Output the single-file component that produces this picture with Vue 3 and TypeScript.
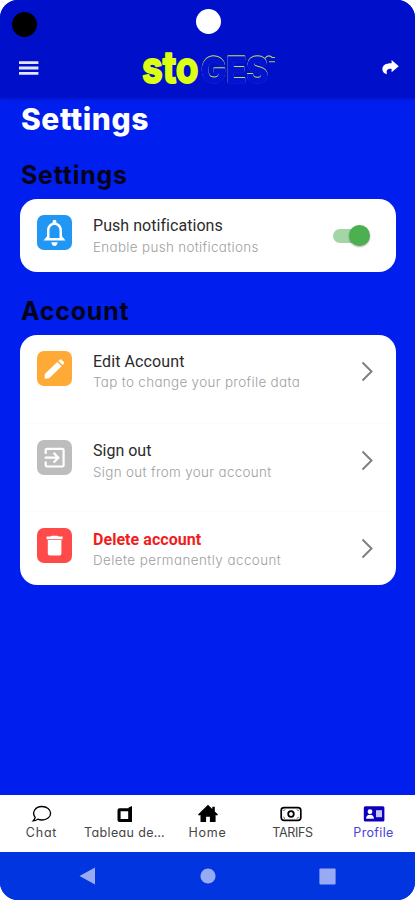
<script setup lang="ts">
import { ref } from 'vue'

interface AccountRow {
  id: string
  title: string
  detail: string
}

interface Tab {
  id: string
  label: string
}

const pushEnabled = ref(true)
const activeTab = ref('profile')

const rows: AccountRow[] = [
  { id: 'edit', title: 'Edit Account', detail: 'Tap to change your profile data' },
  { id: 'signout', title: 'Sign out', detail: 'Sign out from your account' },
  { id: 'delete', title: 'Delete account', detail: 'Delete permanently account' },
]

const tabs: Tab[] = [
  { id: 'chat', label: 'Chat' },
  { id: 'board', label: 'Tableau de…' },
  { id: 'home', label: 'Home' },
  { id: 'tarifs', label: 'TARIFS' },
  { id: 'profile', label: 'Profile' },
]
</script>

<template>
  <div class="phone">
    <header class="top">
      <div class="status">
        <span class="dot"></span>
        <span class="camera"></span>
      </div>
      <div class="appbar">
        <svg class="menu" width="20" height="14" viewBox="0 0 20 14">
          <path d="M0 1.7h19.4M0 7h19.4M0 12.3h19.4" stroke="#e4e4ff" stroke-width="2.8" />
        </svg>
        <svg class="logo" width="136" height="44" viewBox="0 0 136 44">
          <text class="ges" x="61" y="37" textLength="67" lengthAdjust="spacingAndGlyphs">GES</text>
          <path d="M125 12.5q2.5-4 6-2l1 1h3M129 15.8h6" fill="none" stroke="#b3ce5c" stroke-width="1.1" />
          <text class="sto" x="2" y="36.8" textLength="56.5" lengthAdjust="spacingAndGlyphs">sto</text>
        </svg>
        <svg class="share" width="17" height="15" viewBox="0 0 17 15">
          <path d="M9.6 0 16.8 6.2 9.6 12.2V8.9C5.7 8.6 3.9 9.8 5 14.3 2 13.4.4 11.8.4 9.2.4 5.2 3.6 3.2 9.6 3.2Z" fill="#fff" />
        </svg>
      </div>
    </header>

    <main class="content">
      <h1>Settings</h1>
      <h2 class="h-settings">Settings</h2>
      <section class="card single">
        <div class="row">
          <span class="tile push">
            <svg width="35" height="35" viewBox="0 0 35 35">
              <path d="M6.5 25.5h22l-3.5-4.3v-5.5c0-4.2-2.2-7.2-5.6-8V6.6a1.9 1.9 0 0 0-3.8 0v1.1c-3.4.8-5.6 3.8-5.6 8v5.5ZM12.5 23v-7.2c0-3.3 1.9-5.8 5-5.8s5 2.5 5 5.8V23Z" fill="#fff" fill-rule="evenodd" />
              <path d="M14.3 27.3h6.4q-.6 3.6-3.2 3.6t-3.2-3.6Z" fill="#fff" />
            </svg>
          </span>
          <div class="copy">
            <div class="title t-push">Push notifications</div>
            <div class="detail d-push">Enable push notifications</div>
          </div>
          <button class="switch" :class="{ on: pushEnabled }" aria-label="Push notifications" @click="pushEnabled = !pushEnabled"><span></span></button>
        </div>
      </section>

      <h2 class="h-account">Account</h2>
      <section class="card list">
        <div v-for="row in rows" :key="row.id" class="row">
          <span class="tile" :class="row.id">
            <svg v-if="row.id === 'edit'" width="35" height="35" viewBox="0 0 35 35" fill="#fff">
              <path d="m7.6 27.8.2-4.7L20.3 11l4.3 4.2-12.4 12.1Z" />
              <path d="m21.4 10 1.4-1.3q.9-.8 1.8 0l2.2 2.2q.8.9 0 1.8l-1.3 1.4Z" />
            </svg>
            <svg v-else-if="row.id === 'signout'" width="35" height="35" viewBox="0 0 35 35" fill="none" stroke="#fff" stroke-width="2.2">
              <path d="M8.7 14V10q0-1.2 1.2-1.2h15.5q1.2 0 1.2 1.2v15.3q0 1.2-1.2 1.2H9.9q-1.2 0-1.2-1.2v-3.8M7.7 17.7h13M16.6 12.9l4.8 4.8-4.8 4.8" />
            </svg>
            <svg v-else width="35" height="35" viewBox="0 0 35 35" fill="#fff">
              <path d="M9.5 8.5h4l1.2-.8h5.7l1.2.8h4v2.8h-16ZM10.8 12h13.6v13.6q0 2-2 2h-9.6q-2 0-2-2Z" />
            </svg>
          </span>
          <div class="copy">
            <div class="title" :class="'t-' + row.id">{{ row.title }}</div>
            <div class="detail" :class="'d-' + row.id">{{ row.detail }}</div>
          </div>
          <svg class="chevron" width="13" height="21" viewBox="0 0 13 21">
            <path d="m1.5 1.5 9 9-9 9" fill="none" stroke="#808080" stroke-width="2" />
          </svg>
        </div>
      </section>
    </main>

    <nav class="tabs">
      <button v-for="tab in tabs" :key="tab.id" class="tab" :class="[tab.id, { active: tab.id === activeTab }]" @click="activeTab = tab.id">
        <svg v-if="tab.id === 'chat'" width="22" height="20" viewBox="0 0 22 20">
          <path d="M4.2 13.4C.6 8.8 3.8 2.5 11 2.5c4.8 0 8.6 2.9 8.6 6.7s-3.8 6.8-8.6 6.8c-1.6 0-3-.3-4.2-.8-1.2.9-2.9 1.7-4.7 1.7 1-.9 1.9-2.2 2.1-3.5Z" fill="none" stroke="currentColor" stroke-width="1.3" />
        </svg>
        <svg v-else-if="tab.id === 'board'" width="22" height="20" viewBox="0 0 22 20">
          <path d="M14.6 3.5 18 2v16H5.5q-2 0-2-2V6.3q0-2 2-2h9.1ZM6.6 7.3v7.6h7.6V7.3Z" fill="currentColor" fill-rule="evenodd" />
        </svg>
        <svg v-else-if="tab.id === 'home'" width="22" height="20" viewBox="0 0 22 20">
          <path d="M11 .8 15.3 5V2.7h2.5v4.8l3.2 3-.9 1-1.5-.6V18h-5.7v-5.3H9.1V18H3.5v-7.1l-1.6.6-.9-1Z" fill="currentColor" />
        </svg>
        <svg v-else-if="tab.id === 'tarifs'" width="22" height="20" viewBox="0 0 22 20">
          <rect x="1.2" y="3.6" width="19.6" height="12.8" rx="2.8" fill="none" stroke="currentColor" stroke-width="1.7" />
          <circle cx="11" cy="10" r="2.8" fill="none" stroke="currentColor" stroke-width="1.8" />
          <path d="m3.4 7 1.6-1.6M17 5.4 18.6 7M3.4 13 5 14.6M17 14.6l1.6-1.6" stroke="currentColor" stroke-width=".8" />
        </svg>
        <svg v-else width="22" height="20" viewBox="0 0 22 20">
          <rect x=".8" y="2.2" width="20.6" height="15.3" rx="1.5" fill="currentColor" />
          <circle cx="7" cy="7.7" r="2.4" fill="#fff" />
          <path d="M3.1 14.8q0-4 3.9-4t3.9 4Z" fill="#fff" />
          <rect x="13" y="6.2" width="6" height="7" fill="#c6c3ff" />
        </svg>
        <span class="label">{{ tab.label }}</span>
      </button>
    </nav>

    <footer class="system">
      <svg width="17" height="18" viewBox="0 0 17 18"><path d="M16 .5v17L.5 9Z" fill="#99aaf5" /></svg>
      <svg width="16" height="16" viewBox="0 0 16 16"><circle cx="8" cy="8" r="7.6" fill="#99aaf5" /></svg>
      <svg width="17" height="17" viewBox="0 0 17 17"><rect x=".4" y=".4" width="16.2" height="16.2" rx="1" fill="#99aaf5" /></svg>
    </footer>
  </div>
</template>

<style>
body { background: #fff; }
</style>

<style scoped>
* { box-sizing: border-box; }
.phone {
  width: 415px;
  height: 900px;
  border-radius: 18px;
  overflow: hidden;
  background: #001fee;
  display: flex;
  flex-direction: column;
  font-family: Inter, "Open Sans", sans-serif;
  font-feature-settings: "cv11";
}
button { border: 0; padding: 0; background: none; font: inherit; font-feature-settings: inherit; letter-spacing: inherit; }
svg { display: block; flex: none; }
.top { height: 98px; background: #000fca; box-shadow: 0 1px 3px #0008a880; flex: none; }
.status { height: 46px; display: flex; padding: 9px 12px 0; }
.dot { width: 25px; height: 25px; border-radius: 50%; background: #000; margin-top: 3px; }
.camera { width: 25px; height: 25px; border-radius: 50%; background: #fff; margin-left: 158.5px; }
.appbar { height: 44px; display: flex; align-items: center; padding: 0 16px 0 19px; }
.logo { margin-left: 101px; overflow: visible; }
.share { margin: 0 0 2px auto; }
.logo text { font-family: Inter, sans-serif; font-feature-settings: normal; }
.sto { font-size: 44px; font-weight: 700; fill: #dcff13; stroke: #dcff13; stroke-width: 2; stroke-linejoin: round; }
.ges {
  font-size: 35px;
  font-weight: 700;
  fill: #0214d2;
  stroke: #0214d2;
  stroke-width: 1.6;
  stroke-linejoin: round;
  filter: drop-shadow(0 -1px 0 #c5df48) drop-shadow(.4px .8px 0 #2740bd);
}

.content { flex: 1; padding: 0 20px; }
h1, h2 { margin: 0; white-space: nowrap; font-weight: 700; }
h1 { height: 61px; padding: 1px 0 0 1px; font-size: 30px; line-height: 40px; color: #fff; font-weight: 800; letter-spacing: .55px; }
h2 { padding-left: 1px; font-size: 25px; line-height: 32px; color: #03031c; height: 40px; letter-spacing: .75px; }
.h-account { margin-top: 23px; }
.card { background: #fff; border-radius: 17px; width: 376px; }
.single { height: 73px; }
.list { height: 250px; }
.row { height: 88.7px; display: flex; padding: 16px 16px 0 17px; }
.list .row:last-child { height: 72px; }
.list .row + .row { box-shadow: 0 -1px #fcfcfc; }
.tile { width: 35px; height: 35px; border-radius: 7px; flex: none; }
.push { background: #2196f3; }
.tile.edit { background: #ffa936; }
.tile.signout { background: #bdbdbd; }
.tile.delete { background: #ff4a4a; }
.copy { margin-left: 21px; flex: 1; white-space: nowrap; }
.title { font-family: Roboto, sans-serif; font-size: 16px; line-height: 22px; color: #2b2b2b; }
.t-push { letter-spacing: .05px; }
.t-edit { letter-spacing: .1px; }
.t-delete { color: #f11d1d; font-weight: 700; letter-spacing: .05px; padding-top: 1px; margin-bottom: -1px; }
.detail { font-size: 13.4px; line-height: 20px; color: #a0a0a0; font-weight: 300; letter-spacing: .34px; }
.d-edit { line-height: 19px; }
.d-delete { letter-spacing: .44px; }
.switch { width: 37px; height: 21px; margin: 10px 10px 0 0; display: flex; align-items: center; position: relative; }
.switch::before { content: ""; width: 34px; height: 14px; border-radius: 7px; background: #bbb; }
.switch.on::before { background: #a3d6a5; }
.switch span { position: absolute; left: 0; top: 0; width: 21px; height: 21px; border-radius: 50%; background: #eee; box-shadow: 0 1px 2px #0005; }
.switch.on span { left: 16px; background: #4caf50; }
.chevron { margin: 10px 6px 0 0; }

.tabs { height: 57px; background: #fff; display: grid; grid-template-columns: repeat(5, 83px); flex: none; }
.tab { display: flex; flex-direction: column; align-items: center; padding-top: 9px; color: #000; }
.label { font-size: 12.5px; line-height: 18px; color: #454545; white-space: nowrap; letter-spacing: .35px; }
.chat .label, .home .label { letter-spacing: .8px; }
.tarifs .label { letter-spacing: -.3px; padding-left: 4px; }
.tab.active { color: #0d00bd; }
.tab.active .label { color: #4c42d4; }
.system { height: 48px; background: #0035df; display: flex; justify-content: space-between; align-items: center; padding: 0 79px; flex: none; }
</style>
